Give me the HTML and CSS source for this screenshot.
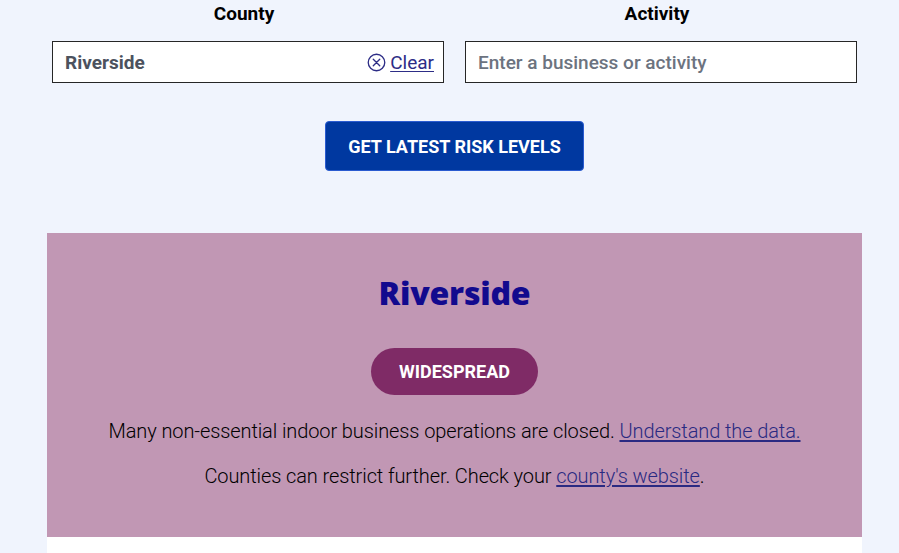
FILE: index.html
```html
<!DOCTYPE html>
<html lang="en">
<head>
<meta charset="utf-8">
<title>Risk levels</title>
<link rel="stylesheet" href="styles.css">
</head>
<body>
<main class="page">
  <form class="search">
    <div class="fields">
      <div class="field">
        <label class="field-label">County</label>
        <div class="input-box">
          <span class="input-value">Riverside</span>
          <a class="clear" href="#">
            <svg class="clear-icon" viewBox="0 0 20 20" width="19" height="19" aria-hidden="true">
              <circle cx="10" cy="10" r="8.7" fill="none" stroke="currentColor" stroke-width="1.4"/>
              <path d="M6.6 6.6 L13.4 13.4 M13.4 6.6 L6.6 13.4" stroke="currentColor" stroke-width="1.4" stroke-linecap="round"/>
            </svg><span class="clear-text">Clear</span>
          </a>
        </div>
      </div>
      <div class="field">
        <label class="field-label">Activity</label>
        <div class="input-box">
          <span class="input-placeholder">Enter a business or activity</span>
        </div>
      </div>
    </div>
    <div class="actions">
      <button type="button" class="submit">GET LATEST RISK LEVELS</button>
    </div>
  </form>
  <section class="result">
    <h2 class="county-name">Riverside</h2>
    <div class="pill-row"><span class="pill">WIDESPREAD</span></div>
    <p class="note">Many non-essential indoor business operations are closed. <a href="#">Understand the data.</a></p>
    <p class="note">Counties can restrict further. Check your <a href="#">county's website</a>.</p>
  </section>
  <div class="below"></div>
</main>
</body>
</html>
```
FILE: styles.css
```css
html, body {
  margin: 0;
  padding: 0;
}
body {
  background: #f0f4fd;
  font-family: Roboto, "Liberation Sans", sans-serif;
  color: #000;
}
.page {
  width: 815px;
  margin-left: 47px;
}
.search {
  padding: 0 5px;
}
.fields {
  display: grid;
  grid-template-columns: 392px 392px;
  column-gap: 21px;
}
.field {
  display: flex;
  flex-direction: column;
}
.field-label {
  text-align: center;
  font-weight: 700;
  font-size: 19px;
  line-height: 28px;
  margin-left: -8px;
  height: 28px;
}
.input-box {
  margin-top: 13px;
  height: 42px;
  box-sizing: border-box;
  border: 1px solid #262626;
  background: #fff;
  display: flex;
  align-items: center;
  padding: 0 9px 0 12px;
}
.input-value {
  font-weight: 700;
  font-size: 19px;
  color: #4c525e;
  flex: 1;
}
.input-placeholder {
  font-weight: 500;
  font-size: 19px;
  color: #6c737f;
  flex: 1;
}
.clear {
  display: flex;
  align-items: center;
  color: #2d2d86;
  text-decoration: none;
  font-size: 19px;
}
.clear-icon {
  margin-right: 4px;
}
.clear-text {
  text-decoration: underline;
  text-underline-offset: 2px;
}
.actions {
  display: flex;
  justify-content: center;
  margin-top: 38px;
}
.submit {
  width: 259px;
  height: 50px;
  background: #0038a0;
  color: #fff;
  border: 1px solid #2a5bd0;
  border-radius: 4px;
  font-family: Roboto, "Liberation Sans", sans-serif;
  font-weight: 700;
  font-size: 18px;
  padding: 0;
  cursor: pointer;
}
.result {
  margin-top: 62px;
  background: #c197b4;
  height: 304px;
  padding-top: 44px;
  box-sizing: border-box;
  text-align: center;
}
.county-name {
  margin: 0;
  font-family: "Open Sans", Lato, sans-serif;
  font-weight: 800;
  font-size: 32px;
  line-height: 32px;
  color: #120a8e;
  letter-spacing: -0.2px;
}
.pill-row {
  margin-top: 39px;
  display: flex;
  justify-content: center;
}
.pill {
  display: inline-flex;
  align-items: center;
  justify-content: center;
  width: 167px;
  height: 47px;
  border-radius: 24px;
  background: #7f2b66;
  color: #fff;
  font-weight: 700;
  font-size: 18px;
}
.note {
  margin: 0;
  font-weight: 300;
  font-size: 20px;
  line-height: 26px;
  color: #000;
  letter-spacing: -0.1px;
}
.pill-row + .note {
  margin-top: 23px;
}
.note + .note {
  margin-top: 19px;
}
.note a {
  color: #2a2a82;
  text-decoration: underline;
  text-underline-offset: 2px;
}
.below {
  background: #fff;
  height: 20px;
}
```
